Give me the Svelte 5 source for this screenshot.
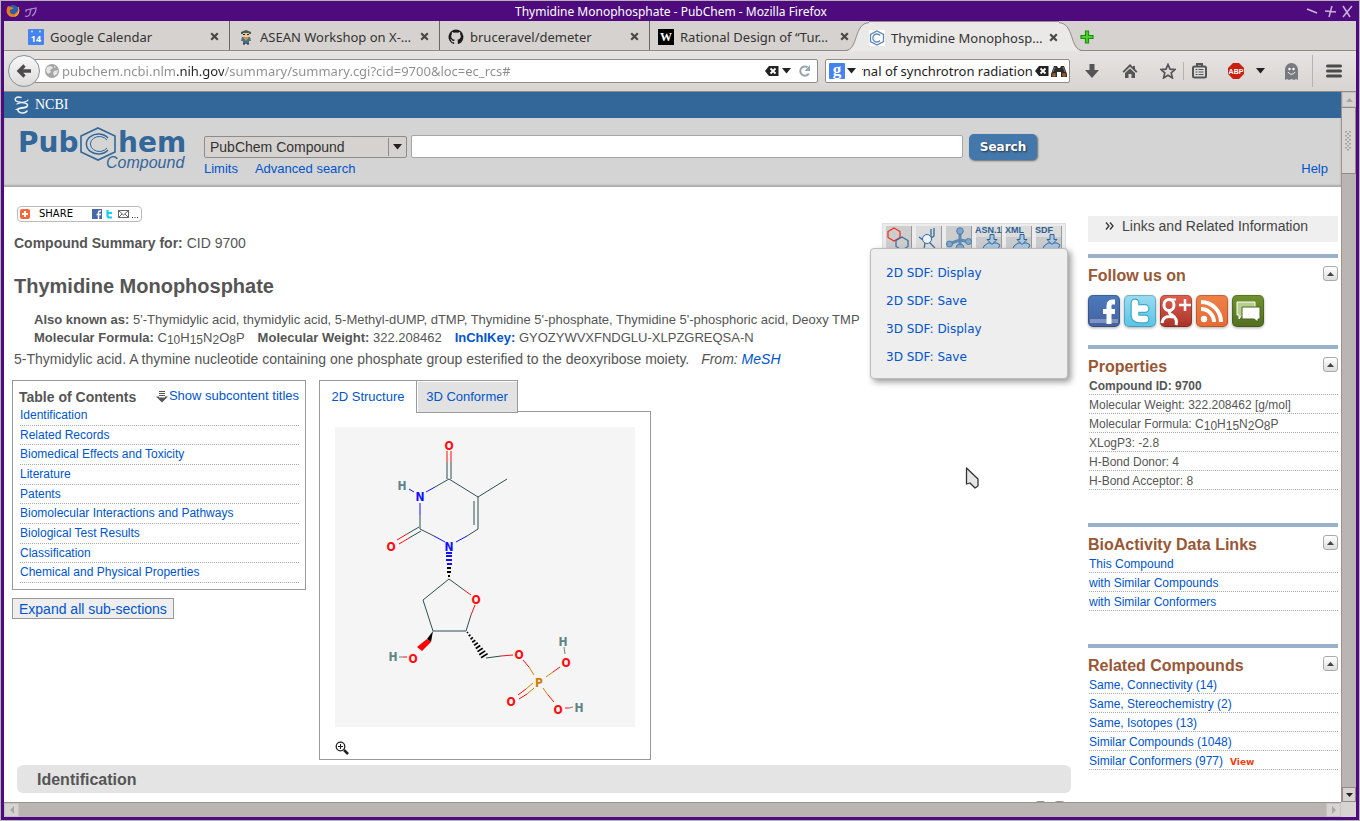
<script>
  import { onMount } from 'svelte';

  let searchField;
  let url = $state('pubchem.ncbi.nlm.nih.gov/summary/summary.cgi?cid=9700&loc=ec_rcs#');
  let webQuery = $state('Journal of synchrotron radiation');
  let query = $state('');

  onMount(() => {
    searchField.scrollLeft = searchField.scrollWidth;
  });

  const tabs = [
    { icon: 'calendar', title: 'Google Calendar' },
    { icon: 'mascot', title: 'ASEAN Workshop on X-…' },
    { icon: 'github', title: 'bruceravel/demeter' },
    { icon: 'w', title: 'Rational Design of “Tur…' }
  ];

  const toc = [
    'Identification',
    'Related Records',
    'Biomedical Effects and Toxicity',
    'Literature',
    'Patents',
    'Biomolecular Interactions and Pathways',
    'Biological Test Results',
    'Classification',
    'Chemical and Physical Properties'
  ];

  const menu = ['2D SDF: Display', '2D SDF: Save', '3D SDF: Display', '3D SDF: Save'];
  const bioLinks = ['This Compound', 'with Similar Compounds', 'with Similar Conformers'];
  const related = [
    'Same, Connectivity (14)',
    'Same, Stereochemistry (2)',
    'Same, Isotopes (13)',
    'Similar Compounds (1048)',
    'Similar Conformers (977)'
  ];

  const C = '#2f4f4f', O = '#ff0d0d', N = '#1010ff', H = '#5f8585', P = '#d08000';
  const atoms = [
    ['O', 114, 18, O], ['H', 67, 58, H], ['N', 85, 69, N], ['N', 114, 119, N], ['O', 56, 119, O],
    ['O', 141, 172, O], ['O', 78, 231, O], ['H', 58, 229, H], ['O', 184, 227, O], ['P', 204, 255, P],
    ['O', 176, 274, O], ['O', 231, 235, O], ['H', 228, 214, H], ['O', 223, 282, O], ['H', 244, 280, H]
  ];
  /* Each bond is split at its midpoint: one stroke per atom colour. */
  const bonds = [
    [112, 24, 112, 35, O], [112, 35, 112, 52, C], [116, 24, 116, 35, O], [116, 35, 116, 52, C],
    [114, 52, 143, 70, C], [143, 70, 172, 52, C], [143, 70, 143, 102, C], [139, 74, 139, 98, C],
    [143, 102, 132, 109, C], [132, 109, 121, 115, N], [110, 115, 99, 109, N], [99, 109, 85, 102, C],
    [85, 102, 85, 88, C], [85, 88, 85, 76, N], [91, 65, 100, 60, N], [100, 60, 114, 52, C],
    [74, 62, 79, 65, N], [84, 100, 72, 107, C], [72, 107, 62, 113, O], [86, 104, 74, 111, C], [74, 111, 64, 117, O],
    [114, 152, 129, 163, C], [129, 163, 136, 168, O], [114, 152, 88, 173, C], [88, 173, 98, 204, C],
    [98, 204, 131, 204, C], [131, 204, 136, 188, C], [136, 188, 140, 178, O],
    [64, 230, 68, 230, H], [68, 230, 72, 230, O], [151, 231, 166, 229, C], [166, 229, 178, 228, O],
    [188, 233, 194, 240, O], [194, 240, 199, 248, P], [211, 250, 218, 245, P], [218, 245, 225, 240, O],
    [230, 227, 229, 220, H], [208, 261, 213, 268, P], [213, 268, 219, 275, O],
    [198, 256, 191, 262, P], [191, 262, 183, 268, O], [199, 261, 192, 267, P], [192, 267, 184, 272, O],
    [230, 281, 234, 281, O], [234, 281, 238, 280, H]
  ];
  const hashes = Array.from({ length: 9 }, (_, i) => i);
</script>

{#snippet clearIcon()}
  <svg width="14" height="12" viewBox="0 0 14 12" aria-hidden="true">
    <path d="M0 6L4 1H13.500V11H4Z" fill="#222" />
    <path d="M5.500 3.500l5 5m0-5l-5 5" stroke="#fff" stroke-width="1.800" />
  </svg>
{/snippet}

{#snippet caret()}
  <svg width="9" height="6" viewBox="0 0 9 6" aria-hidden="true"><path d="M0 0h9L4.500 5.500Z" fill="#222" /></svg>
{/snippet}

{#snippet closeIcon()}
  <svg width="9" height="9" viewBox="0 0 9 9" aria-hidden="true"><path d="M1.200 1.200l6.600 6.600m0-6.600L1.200 7.800" stroke="#4a4845" stroke-width="2.200" /></svg>
{/snippet}

{#snippet blockHead(title)}
  <div class="block-head">
    <h2>{title}</h2>
    <button class="fold" aria-label="Collapse {title}">
      <svg width="7" height="4" viewBox="0 0 7 4"><path d="M0 4L3.500 0 7 4Z" fill="#444" /></svg>
    </button>
  </div>
{/snippet}

{#snippet formula()}C<sub>10</sub>H<sub>15</sub>N<sub>2</sub>O<sub>8</sub>P{/snippet}

<div class="window">
  <div class="titlebar">
    <svg width="32" height="16" viewBox="0 0 32 16" aria-hidden="true">
      <circle cx="8" cy="8" r="6" fill="#275fae" />
      <path d="M3 3C0 8 2 14 8 14c5 0 7-4 6-8-1 3-3 3-4 5-3 1-6-1-5-4 1-1 3-1 4-2-2-1-5-1-6-2Z" fill="#ed7a1c" />
      <path d="M13 4c2 4 0 8-3 9" stroke="#f7c23c" fill="none" />
      <path d="M20 13c2 1 5 0 5-3l1-4-5 1v2M26 6l5-1c0 4-1 6-4 8" stroke="#b48ad0" fill="none" stroke-width="1.200" />
    </svg>
    <span class="window-title">Thymidine Monophosphate - PubChem - Mozilla Firefox</span>
    <svg width="50" height="16" viewBox="0 0 50 16" aria-hidden="true">
      <path d="M2 6l10 4M20 8l11 1M27 3l-3 11M38 3l7 11M47 3l-9 11" stroke="#cbb2dc" fill="none" stroke-width="1.500" />
    </svg>
  </div>

  <div class="tabstrip">
    {#each tabs as tab}
      <div class="tab">
        <svg width="16" height="16" viewBox="0 0 16 16" aria-hidden="true">
          {#if tab.icon === 'calendar'}
            <rect width="16" height="16" rx="1" fill="#4583f0" />
            <circle cx="4" cy="2.500" r="1" fill="#cfe0ff" /><circle cx="12" cy="2.500" r="1" fill="#cfe0ff" />
            <text x="8" y="13" text-anchor="middle" class="cal">14</text>
          {:else if tab.icon === 'mascot'}
            <path d="M3 3l5-2 5 2v2H3Z" fill="#4b5a50" /><rect x="5" y="4" width="6" height="4" fill="#e9c79b" />
            <rect x="5" y="5" width="2" height="1" fill="#222" /><rect x="9" y="5" width="2" height="1" fill="#222" />
            <path d="M4 8h8l1 4h-2v3H5v-3H3Z" fill="#4f6c84" /><path d="M5 8h6l-3 4Z" fill="#c3a13d" /><path d="M5 15h2M9 15h2" stroke="#222" />
          {:else if tab.icon === 'github'}
            <path fill="#1b1b1b" d="M8 .5a7.500 7.500 0 0 0-2.400 14.600c.4.100.5-.2.500-.4v-1.500c-2 .5-2.500-.8-2.700-1.300-.1-.3-.5-.9-.8-1.100-.3-.2-.7-.6 0-.6s1.200.6 1.300.9c.7 1.300 2 .9 2.400.7.100-.5.300-.9.500-1.100C5 10.500 3.200 9.800 3.200 7c0-.8.300-1.500.8-2-.1-.2-.4-1 .1-2 0 0 .6-.2 2 .8a7 7 0 0 1 3.800 0c1.400-1 2-.8 2-.8.500 1 .2 1.800.1 2 .5.500.8 1.200.8 2 0 2.800-1.800 3.500-3.500 3.700.3.200.5.700.5 1.400v2.600c0 .2.100.5.500.4A7.500 7.500 0 0 0 8 .5Z" />
          {:else}
            <rect width="16" height="16" /><text x="8" y="12" text-anchor="middle" class="wiley">W</text>
          {/if}
        </svg>
        <span class="tab-title">{tab.title}</span>
        <button class="plain" aria-label="Close tab">{@render closeIcon()}</button>
      </div>
    {/each}
    <div class="active-wrap">
      <svg class="curve" width="30" height="30" viewBox="0 0 30 30" aria-hidden="true">
        <path d="M0 30C14 30 8 2 25 2H30V30Z" fill="#ebe9e8" /><path d="M0 29.500C14 29.500 8 1.500 25 1.500H30" fill="none" stroke="#8f8b88" />
      </svg>
      <div class="active-tab">
        <svg width="16" height="16" viewBox="0 0 16 16" aria-hidden="true">
          <rect width="16" height="16" fill="#fff" /><path d="M8 1l6.500 3.500v7L8 15l-6.500-3.500v-7Z" fill="none" stroke="#5b87b8" stroke-width="1.300" />
          <path d="M11 5.500a4 4 0 1 0 0 5" fill="none" stroke="#5b87b8" stroke-width="1.300" />
        </svg>
        <span class="tab-title">Thymidine Monophosp…</span>
        <button class="plain" aria-label="Close tab">{@render closeIcon()}</button>
      </div>
      <svg class="curve" width="30" height="30" viewBox="0 0 30 30" aria-hidden="true">
        <path d="M30 30C16 30 22 2 5 2H0V30Z" fill="#ebe9e8" /><path d="M30 29.500C16 29.500 22 1.500 5 1.500H0" fill="none" stroke="#8f8b88" />
      </svg>
    </div>
    <button class="plain new-tab" aria-label="Open a new tab">
      <svg width="14" height="14" viewBox="0 0 14 14"><path d="M5.500 1h3v4.500H13v3H8.500V13h-3V8.500H1v-3h4.500Z" fill="#4fd02c" stroke="#16910d" stroke-width="1.200" /></svg>
    </button>
  </div>

  <div class="navbar">
    <button class="back" aria-label="Back">
      <svg width="16" height="16" viewBox="0 0 16 16"><path d="M8.500 2.500L3 8l5.500 5.500M3.500 8H15" fill="none" stroke="#4b4b4b" stroke-width="3.300" /></svg>
    </button>
    <div class="field urlbar">
      <svg width="14" height="14" viewBox="0 0 14 14" aria-hidden="true">
        <circle cx="7" cy="7" r="7" fill="#a5a5a5" /><path d="M2 3l4-1 2 2-3 2 1 2-3 2-2-3ZM9 7l4-1-1 4-3 2-1-3ZM9 2l2 1-2 1Z" fill="#e6e6e6" />
      </svg>
      <input class="url" aria-label="Address" bind:value={url} />
      <button class="plain" aria-label="Clear address">{@render clearIcon()}</button>
      <button class="plain" aria-label="Show history">{@render caret()}</button>
      <button class="plain" aria-label="Reload">
        <svg width="14" height="14" viewBox="0 0 14 14"><path d="M10.800 9.500A4.600 4.600 0 1 1 9.500 3.300" fill="none" stroke="#98a5ae" stroke-width="2" /><path d="M12 1v6H6.500Z" fill="#98a5ae" /></svg>
      </button>
    </div>
    <div class="field websearch">
      <svg width="16" height="16" viewBox="0 0 16 16" aria-hidden="true"><rect width="16" height="16" rx="1" fill="#4583f0" /><text x="8" y="12" text-anchor="middle" class="google">g</text></svg>
      <button class="plain" aria-label="Choose search engine">{@render caret()}</button>
      <input aria-label="Web search" bind:this={searchField} bind:value={webQuery} />
      <button class="plain" aria-label="Clear search">{@render clearIcon()}</button>
      <button class="plain" aria-label="Find">
        <svg width="16" height="13" viewBox="0 0 16 13"><path d="M3 1h3l1 2h2l1-2h3l3 8v3h-6V7H6v5H0V9Z" fill="#302c29" /><circle cx="3" cy="10" r="2" fill="#9b5b2b" /><circle cx="13" cy="10" r="2" fill="#9b5b2b" /><path d="M4 2L2 7M12 2l2 5" stroke="#777" /></svg>
      </button>
    </div>
    <div class="tools">
      <button class="plain tool" aria-label="Downloads"><svg width="16" height="16" viewBox="0 0 16 16"><path d="M5.500 1h5v6H15l-7 8-7-8h4.500Z" fill="#555" /></svg></button>
      <button class="plain tool" aria-label="Home"><svg width="16" height="16" viewBox="0 0 16 16"><path d="M8 1L.5 8.500l1.300 1.200L8 3.700l6.200 6 1.300-1.200L13 6V3h-2v1Z" fill="#555" /><path d="M8 5.500l5 4.500v5H9.500v-4h-3v4H3v-5Z" fill="#555" /></svg></button>
      <button class="plain tool star" aria-label="Bookmark this page"><svg width="16" height="16" viewBox="0 0 16 16"><path d="M8 1.500l2 4.600 5 .5-3.800 3.300 1.200 5L8 12.200l-4.400 2.700 1.200-5L1 6.600l5-.5Z" fill="none" stroke="#555" stroke-width="1.700" /></svg></button>
      <span class="rule"></span>
      <button class="plain tool narrow" aria-label="Bookmarks"><svg width="15" height="16" viewBox="0 0 15 16"><path d="M5 3V1h5v2" fill="none" stroke="#555" stroke-width="2" /><rect x="1" y="3.500" width="13" height="11" rx="1.500" fill="none" stroke="#555" stroke-width="2" /><path d="M3.500 6.500h2m1 0h5m-8 2.500h2m1 0h5m-8 2.500h2m1 0h5" stroke="#555" stroke-width="1.200" /></svg></button>
      <button class="plain tool" aria-label="Adblock Plus"><svg width="16" height="16" viewBox="0 0 16 16"><path d="M5 0h6l5 5v6l-5 5H5l-5-5V5Z" fill="#c9200f" /><text x="8" y="11" text-anchor="middle" class="abp">ABP</text></svg></button>
      <button class="plain" aria-label="Adblock options">{@render caret()}</button>
      <button class="plain tool ghost" aria-label="Ghostery"><svg width="15" height="17" viewBox="0 0 15 17"><path d="M1 17V7c0-4 3-7 6.500-7S14 3 14 7v10l-2-1-2 1-2.500-1-2.500 1-2-1Z" fill="#777a80" /><circle cx="5.500" cy="6" r="1.200" fill="#fff" /><circle cx="9.500" cy="6" r="1.200" fill="#fff" /><path d="M4 9c2 3 5 3 7 0" fill="none" stroke="#fff" /></svg></button>
      <span class="rule tall"></span>
      <button class="plain tool" aria-label="Open menu"><svg width="16" height="14" viewBox="0 0 16 14"><path d="M1.500 2h13M1.500 7h13M1.500 12h13" stroke="#4b4b4b" stroke-width="3" stroke-linecap="round" /></svg></button>
    </div>
  </div>

  <div class="viewport">
    <div class="page">
      <div class="ncbi">
        <svg width="15" height="18" viewBox="0 0 15 18" aria-hidden="true">
          <g fill="none" stroke="#eef4f9" stroke-linecap="round">
            <path d="M7 1.500C2 0 0 3 2 5c3 2 9 1 11 3 2 3-3 3.500-6 3.800C3 12.500 3 15 6 16.500c3 1 6 0 7-1.500" stroke-width="1.500" />
            <path d="M14 4c-2 3-8 2-11 4M13 11c-3 2-7 1-11 2.500" stroke-width="1.200" />
          </g>
        </svg>
        <span>NCBI</span>
      </div>

      <header class="masthead">
        <svg class="logo" width="170" height="48" viewBox="0 0 170 48" role="img" aria-label="PubChem Compound">
          <g fill="#336699">
            <text x="-1" y="27" class="logo-big">Pub</text>
            <text x="99" y="27" class="logo-big">hem</text>
            <text x="87" y="43" class="logo-small">Compound</text>
          </g>
          <path d="M79 3l17 8v16l-17 8-17-8V11Z" fill="none" stroke="#336699" stroke-width="1.600" />
          <path d="M89 13a12 10 0 1 0 0 12" fill="none" stroke="#336699" stroke-width="1.500" />
          <path d="M88 15a9 7.500 0 1 0 0 8" fill="none" stroke="#336699" />
        </svg>
        <form class="search" onsubmit={(e) => e.preventDefault()}>
          <div class="search-row">
            <div class="pick">
              <select aria-label="Database"><option>PubChem Compound</option></select>
              <span class="pick-arrow">{@render caret()}</span>
            </div>
            <input class="query" aria-label="Search term" bind:value={query} />
            <button class="go">Search</button>
          </div>
          <div class="search-links"><a href="#limits">Limits</a><a href="#advanced">Advanced search</a></div>
        </form>
        <a class="help" href="#help">Help</a>
      </header>

      <div class="columns">
        <main>
          <div class="intro">
            <div>
              <button class="share">
                <svg width="10" height="10" viewBox="0 0 10 10" aria-hidden="true"><rect width="10" height="10" rx="2" fill="#f8673a" /><path d="M5 2v6M2 5h6" stroke="#fff" stroke-width="2" /></svg>
                <span class="share-word">SHARE</span>
                <svg width="48" height="10" viewBox="0 0 48 10" aria-hidden="true">
                  <rect x="2" width="10" height="10" fill="#4967a8" /><path d="M11 2h-1Q8.500 2 8.500 4v6M6.500 5.500H11" stroke="#fff" stroke-width="1.500" fill="none" />
                  <path d="M17.500 1v5.500q0 2 2 2H22M17.500 4H22" stroke="#0fd0ee" stroke-width="2.200" fill="none" />
                  <rect x="28.500" y="1.500" width="10" height="7" fill="#fff" stroke="#666" /><path d="M29 2l4.500 4L38 2M29 8l3-3M38 8l-3-3" stroke="#666" fill="none" />
                  <path d="M42 8.500h1m1.500 0h1m1.500 0h1" stroke="#333" />
                </svg>
              </button>
              <p class="summary"><b>Compound Summary for:</b> CID 9700</p>
            </div>

            <div class="formats">
              <button aria-label="2D structure"><svg width="26" height="26" viewBox="0 0 26 26"><path d="M8 2l6 3.500v6L8 15l-6-3.500v-6Z" fill="none" stroke="#f22b1b" stroke-width="1.200" /><path d="M16 11l6 3.500v6L16 24l-6-3.500v-6Z" fill="none" stroke="#35689b" stroke-width="1.200" /></svg></button>
              <button aria-label="Search structure"><svg width="26" height="26" viewBox="0 0 26 26"><path d="M15 3v8M18 2v8l-4 3M7 14l-4-3M9 17l-1 6M13 16l6 6" stroke="#35689b" stroke-width="1.300" fill="none" /><circle cx="11" cy="13" r="4.500" fill="#eef4fa" stroke="#35689b" /></svg></button>
              <button aria-label="3D structure"><svg width="26" height="26" viewBox="0 0 26 26"><path d="M14 5v9L3 18m11-4l11 2m-11-2v8" stroke="#5b8ab5" stroke-width="3" fill="none" /><g fill="#7fa8cc" stroke="#4a7cac"><circle cx="14" cy="5" r="3.300" /><circle cx="3.500" cy="18" r="3" /><circle cx="22.500" cy="15.500" r="3" /><circle cx="14" cy="22" r="4" /></g></svg></button>
              {#each ['ASN.1', 'XML', 'SDF'] as kind}
                <button aria-label="Save as {kind}"><svg width="26" height="26" viewBox="0 0 26 26"><rect x="0" y="11" width="25" height="15" fill="#c9cacb" /><path d="M8 20l4-3h9l3 2-3 6H6Z" fill="#a9c5df" stroke="#35689b" /><path d="M14 8.500h4v5h3l-5 5-5-5h3Z" fill="#a9c9e6" stroke="#2d6194" /><text x="-1" y="7" class="kind">{kind}</text></svg></button>
              {/each}
              <div class="popup">
                {#each menu as item}<a href="#sdf">{item}</a>{/each}
              </div>
            </div>
          </div>

          <h1>Thymidine Monophosphate</h1>
          <p class="facts"><b>Also known as:</b> 5'-Thymidylic acid, thymidylic acid, 5-Methyl-dUMP, dTMP, Thymidine 5'-phosphate, Thymidine 5'-phosphoric acid, Deoxy TMP</p>
          <p class="facts row">
            <span><b>Molecular Formula:</b> {@render formula()}</span>
            <span><b>Molecular Weight:</b> 322.208462</span>
            <span><a href="#inchi"><b>InChIKey:</b></a> GYOZYWVXFNDGLU-XLPZGREQSA-N</span>
          </p>
          <p class="blurb">5-Thymidylic acid. A thymine nucleotide containing one phosphate group esterified to the deoxyribose moiety. <i>From: <a href="#mesh">MeSH</a></i></p>

          <div class="body-row">
            <div class="left">
              <nav class="toc">
                <div class="toc-head">
                  <h2>Table of Contents</h2>
                  <a href="#subcontent">
                    <svg width="12" height="13" viewBox="0 0 12 13" aria-hidden="true"><path d="M3 1.500h6M3 3.500h6M3 5.500h6" stroke="#555" /><path d="M0 6.500h3V7.500h6v-1h3L6 12.500Z" fill="#555" /></svg>Show subcontent titles</a>
                </div>
                <ul>{#each toc as item}<li><a href="#section">{item}</a></li>{/each}</ul>
              </nav>
              <button class="expand">Expand all sub-sections</button>
            </div>

            <div class="structure">
              <div class="views">
                <button class="view on">2D Structure</button>
                <button class="view">3D Conformer</button>
              </div>
              <div class="panel">
                <svg class="molecule" viewBox="0 0 300 300" role="img" aria-label="2D structure of Thymidine Monophosphate">
                  <rect width="300" height="300" fill="#f5f5f5" />
                  {#each bonds as [x1, y1, x2, y2, color]}<line {x1} {y1} {x2} {y2} stroke={color} />{/each}
                  <path d="M111 126h6m-6 3h6m-6 4h6m-5 4h5" stroke={N} stroke-width="2" />
                  <path d="M112 141h4m-4 4h4m-3 4h2" stroke="#000" stroke-width="2" />
                  <path d="M98 204l-6 8 4 3Z" fill="#000" />
                  <path d="M92 212l4 3-9 9-5-4Z" fill="#ff0000" />
                  {#each hashes as i}
                    <line x1={132 + i * 2 - i / 4} y1={206 + i * 2.9 + i / 5} x2={133 + i * 2.200 + i / 4} y2={205 + i * 2.9 - i / 5} stroke="#000" stroke-width="1.700" />
                  {/each}
                  {#each atoms as [label, x, y, color]}<text {x} y={y + 5} fill={color} text-anchor="middle" class="atom">{label}</text>{/each}
                </svg>
                <button class="plain zoom" aria-label="Enlarge structure">
                  <svg width="14" height="14" viewBox="0 0 14 14"><circle cx="5.500" cy="5.500" r="4.300" fill="#fff" stroke="#222" stroke-width="1.300" /><path d="M5.500 3v5M3 5.500h5" stroke="#222" /><path d="M9 9l4 4" stroke="#222" stroke-width="2.500" /></svg>
                </button>
              </div>
            </div>
          </div>

          <h2 class="section">Identification</h2>
          <div class="stubs"><span></span><span></span></div>
        </main>

        <aside>
          <a class="jump" href="#links">
            <svg width="9" height="8" viewBox="0 0 9 8" aria-hidden="true"><path d="M1 .5L4 4 1 7.500M5 .5L8 4 5 7.500" fill="none" stroke="#333" stroke-width="1.300" /></svg>
            Links and Related Information</a>

          <section class="block">
            {@render blockHead('Follow us on')}
            <div class="social">
              <a class="fb" href="#facebook" aria-label="Facebook"><svg viewBox="0 0 32 32"><path d="M2 26h28" stroke="#8094c4" stroke-width="4" /><path d="M27 7h-3q-3 0-3 4v18M15 16.500h12" fill="none" stroke="#fff" stroke-width="5" /></svg></a>
              <a class="tw" href="#twitter" aria-label="Twitter"><svg viewBox="0 0 32 32"><path d="M11 8v12q0 4 5 4h5M11 13.500h10" fill="none" stroke="#3daacc" stroke-width="9" stroke-linecap="round" /><path d="M11 8v12q0 4 5 4h5M11 13.500h10" fill="none" stroke="#fff" stroke-width="6.500" stroke-linecap="round" /></svg></a>
              <a class="gp" href="#google" aria-label="Google Plus"><svg viewBox="0 0 32 32"><g fill="none" stroke="#fff"><ellipse cx="9" cy="10" rx="5" ry="5.500" stroke-width="3" /><path d="M8 4.500h8" stroke-width="2" /><path d="M11 15q-4 3 1 5 6 4 4 10M13 22Q3 20 2 28" stroke-width="3" /><path d="M25 4v12M19 10h12" stroke-width="2.500" /></g></svg></a>
              <a class="rss" href="#rss" aria-label="RSS"><svg viewBox="0 0 32 32"><circle cx="8" cy="24" r="3.200" fill="#fff" /><path d="M5 14a13 13 0 0 1 13 13M5 7a20 20 0 0 1 20 20" fill="none" stroke="#fff" stroke-width="4" /></svg></a>
              <a class="chat" href="#blog" aria-label="Blog"><svg viewBox="0 0 32 32"><path d="M6 7h17v13H10l-3 4v-4H5V7Z" fill="#b7cf8d" stroke="#fff" /><path d="M10 12h18v12h-2v3l-4-3H10Z" fill="#fff" stroke="#47661b" /></svg></a>
            </div>
          </section>

          <section class="block">
            {@render blockHead('Properties')}
            <ul>
              <li><b>Compound ID: 9700</b></li>
              <li>Molecular Weight: 322.208462 [g/mol]</li>
              <li>Molecular Formula: {@render formula()}</li>
              <li>XLogP3: -2.8</li>
              <li>H-Bond Donor: 4</li>
              <li>H-Bond Acceptor: 8</li>
            </ul>
          </section>

          <section class="block">
            {@render blockHead('BioActivity Data Links')}
            <ul>{#each bioLinks as item}<li><a href="#bio">{item}</a></li>{/each}</ul>
          </section>

          <section class="block">
            {@render blockHead('Related Compounds')}
            <ul>
              {#each related as item, i}
                <li><a href="#related">{item}</a>{#if i === 4}<a class="view-tag" href="#view">View</a>{/if}</li>
              {/each}
            </ul>
          </section>
        </aside>
      </div>
    </div>

    <div class="vbar">
      <span class="cap dim"><svg width="7" height="4" viewBox="0 0 7 4"><path d="M0 4L3.500 0 7 4Z" fill="#aaa6a2" /></svg></span>
      <span class="thumb">
        <svg width="7" height="20" viewBox="0 0 7 20"><path d="M1 0v20M5 0v20M3 2v18" stroke="#8f8a86" stroke-width="1.400" stroke-dasharray="1.500 2.500" /></svg>
      </span>
      <span class="cap end"><svg width="7" height="4" viewBox="0 0 7 4"><path d="M0 0h7L3.500 4Z" fill="#222" /></svg></span>
    </div>
    <div class="hbar">
      <span class="cap dim"><svg width="4" height="8" viewBox="0 0 4 8"><path d="M4 0v8L0 4Z" fill="#aaa6a2" /></svg></span>
      <span class="cap dim"><svg width="4" height="8" viewBox="0 0 4 8"><path d="M0 0v8L4 4Z" fill="#aaa6a2" /></svg></span>
    </div>
    <div class="corner"></div>
  </div>

  <svg class="pointer" width="15" height="22" viewBox="0 0 15 22" aria-hidden="true">
    <path d="M1.500 1v16l3.500-1 5 5 3-2V12Z" fill="#e6e6e6" stroke="#333" stroke-width="1.300" stroke-linejoin="round" />
  </svg>
</div>

<style>
  :global(body) { margin: 0; }
  * { box-sizing: border-box; }
  h1, h2, p, ul { margin: 0; padding: 0; }
  ul { list-style: none; }
  button, input, select { font: inherit; color: inherit; margin: 0; }
  svg { display: block; flex: none; }
  .plain { border: 0; padding: 0; background: none; display: flex; align-items: center; justify-content: center; }

  .window {
    position: relative;
    display: flex;
    flex-direction: column;
    height: 100vh;
    border: 1px solid #b7b3b8;
    padding: 0 3px 3px;
    background: #4e0b7d;
    font-family: "Noto Sans", sans-serif;
    color: #333;
    overflow: hidden;
  }
  .titlebar { display: flex; align-items: center; justify-content: space-between; height: 20px; color: #fff; font-size: 12px; padding: 0 1px; }

  .tabstrip { display: flex; height: 30px; padding-left: 16px; background: #d6d2cf; box-shadow: inset 0 -1px #8f8b88; font-size: 13px; }
  .tab { display: flex; align-items: center; gap: 6px; width: 210px; height: 29px; padding: 2px 10px 0 8px; border-right: 1px solid #6a6662; }
  .tab:nth-child(4) { border-right: 0; width: 199px; padding-right: 0; }
  .tab-title { flex: 1; white-space: nowrap; overflow: hidden; }
  .active-wrap { display: flex; height: 30px; margin-left: -4px; }
  .active-tab { display: flex; align-items: center; gap: 6px; width: 190px; margin: 0 -6px; padding: 2px 1px 0 0; border-top: 1px solid #8f8b88; background: #ebe9e8; z-index: 1; }
  .active-tab .tab-title { margin-right: -6px; }
  .active-tab .plain { margin-left: 6px; }
  .active-tab .tab-title { overflow: visible; min-width: 0; }
  .new-tab { padding-top: 2px; margin-left: -3px; }
  .cal { font: bold 9px "Noto Sans", sans-serif; fill: #fff; }
  .wiley { font: bold 12px "Liberation Serif", serif; fill: #fff; }
  .google { font: bold 17px "Liberation Serif", serif; fill: #fff; }
  .abp { font: bold 7px "Liberation Sans", sans-serif; fill: #fff; }

  .navbar { display: flex; align-items: center; height: 41px; border-bottom: 1px solid #8f8b88; background: linear-gradient(#e6e3e2, #d7d4d1); font-size: 13px; color: #222; }
  .back { display: grid; place-items: center; width: 32px; height: 32px; margin-left: 4px; padding: 0; border: 1px solid #84909f; border-radius: 50%; background: linear-gradient(#f8f7f7, #dedcdb); z-index: 1; }
  .field { display: flex; align-items: center; height: 24px; border: 1px solid #908c89; border-radius: 2px; background: #fff; }
  .field input { flex: 1; min-width: 0; border: 0; outline: 0; padding: 0; background-color: transparent; }
  .urlbar { flex: 1; margin-left: -8px; padding: 0 5px 0 12px; gap: 3px; }
  .urlbar .plain:last-child { margin-left: 4px; }
  .field .url { color: transparent; background: linear-gradient(90deg, #8d8d8d 114px, #222 114px, #222 162px, #8d8d8d 162px); background-clip: text; -webkit-background-clip: text; }
  .websearch { width: 245px; margin-left: 7px; padding: 0 2px 0 3px; gap: 2px; }
  .websearch input { margin-left: 4px; }
  .tools { display: flex; align-items: center; width: 286px; padding-left: 3px; }
  .tool { width: 38px; height: 32px; }
  .star { width: 34px; padding-left: 4px; }
  .narrow { width: 31px; }
  .narrow + .tool { width: 41px; }
  .ghost { margin-left: 7px; margin-right: 2px; }
  .rule { width: 1px; height: 18px; background: #b6b2af; }
  .rule.tall { height: 32px; }
  .tall + .tool { width: 42px; }

  .viewport { flex: 1; min-height: 0; display: grid; grid-template: minmax(0, 1fr) 15px / minmax(0, 1fr) 15px; background: #d6d3d0; }
  .page { overflow: hidden; background: #fff; color: #555; font-family: "Liberation Sans", Arial, sans-serif; font-size: 12px; }
  .page a { color: #0055cc; text-decoration: none; }
  .ncbi { display: flex; align-items: center; gap: 6px; height: 26px; padding-left: 10px; background: #336699; color: #fff; font: 14px "Liberation Serif", serif; }

  .masthead { display: flex; align-items: flex-start; height: 69px; padding: 7px 13px 0 15px; background: #d4d4d4; box-shadow: inset 0 -2px 2px #aaa; }
  .logo { overflow: visible; }
  .logo-big { font: bold 28px "DejaVu Sans", Verdana, sans-serif; }
  .logo-small { font: italic 16px "Liberation Sans", Arial, sans-serif; }
  .search { flex: 1; max-width: 833px; margin-left: 15px; padding-top: 9px; }
  .search-row { display: flex; align-items: center; height: 26px; }
  .pick { position: relative; width: 203px; height: 22px; margin-right: 4px; }
  .pick select { appearance: none; width: 100%; height: 22px; padding: 0 5px; border: 1px solid #8f8b88; border-radius: 2px; background: #d6d2cf; font-size: 14px; color: #333; }
  .pick-arrow { position: absolute; right: 1px; top: 2px; display: grid; place-items: center; width: 18px; height: 18px; border-left: 1px solid #8f8b88; pointer-events: none; }
  .query { flex: 1; min-width: 0; height: 23px; margin-bottom: 2px; border: 1px solid #a5a5a5; border-radius: 2px; background: #fff; }
  .go { width: 68px; height: 26px; margin-left: 6px; padding: 0; border: 0; border-radius: 5px; background: #4477aa; color: #fff; font: bold 12px "DejaVu Sans", sans-serif; text-shadow: 1px 1px 2px #234; box-shadow: 1px 1px 2px #666; }
  .search-links { display: flex; gap: 17px; padding-top: 1px; font-size: 13px; line-height: 16px; }
  .help { margin-left: auto; padding-top: 36px; font-size: 13px; line-height: 16px; }

  .columns { display: flex; gap: 17px; padding: 19px 3px 0 8px; }
  main { flex: 1; min-width: 0; }
  .intro { display: flex; justify-content: space-between; align-items: flex-start; }
  .share { display: flex; align-items: center; width: 125px; height: 16px; margin: 0 0 11px 5px; padding: 0 3px 0 2px; border: 1px solid #bbb; border-radius: 4px; background: #fff; color: #000; }
  .share-word { flex: 1; padding-left: 9px; text-align: left; font: 10px/14px "DejaVu Sans", sans-serif; }
  .summary { padding-left: 2px; font-size: 14px; line-height: 20px; }
  .formats { position: relative; display: flex; gap: 4px; height: 30px; margin: 17px 5px 0 0; padding: 3px 4px 0 4px; background: #ececec; box-shadow: inset 0 0 0 1px #ddd; }
  .formats button { width: 26px; height: 26px; padding: 0; border: 0; border-right: 1px solid #999; background: #dcdcdc; }
  .formats button:nth-child(1), .formats button:nth-child(3) { background: #cdcdcd; }
  .kind { font: bold 9px "Liberation Sans", Arial, sans-serif; fill: #2d6194; }
  .formats svg { overflow: visible; }
  .popup { position: absolute; top: 25px; right: -2px; display: flex; flex-direction: column; gap: 8px; width: 198px; padding: 14px 15px 11px; border: 1px solid #bcbcbc; border-radius: 4px; background: #eee; box-shadow: 3px 3px 6px #999; font: 12px/20px "DejaVu Sans", Verdana, sans-serif; }

  h1 { margin-top: 21px; padding-left: 2px; font-size: 20px; line-height: 24px; }
  .facts { padding-left: 22px; font-size: 13px; line-height: 18px; white-space: nowrap; }
  h1 + .facts { margin-top: 13px; }
  .row { display: flex; gap: 13px; }
  sub { font-size: 12px; line-height: 0; vertical-align: -2px; }
  .blurb { margin: 2px 0 11px; padding-left: 2px; font-size: 14px; line-height: 20px; white-space: nowrap; }
  .blurb i { margin-left: 8px; }

  .body-row { display: flex; gap: 13px; align-items: flex-start; }
  .left { width: 294px; }
  .toc { border: 1px solid #999; padding: 6px 6px 6px 7px; }
  .toc-head { display: flex; justify-content: space-between; height: 19px; margin-left: -1px; }
  .toc-head h2 { font-size: 14px; line-height: 20px; }
  .toc-head a { display: flex; align-items: center; gap: 1px; font-size: 13px; line-height: 18px; height: 18px; }
  .toc ul { display: grid; grid-auto-rows: 1fr; height: 177px; }
  .toc li, .block li { border-bottom: 1px dotted #aaa; }
  .toc li { line-height: 18px; font-size: 12px; }
  .expand { display: block; height: 21px; margin-top: 8px; padding: 0 6px; border: 1px solid #999; background: #eee; color: #0055cc; font-size: 14px; line-height: 18px; }
  .structure { width: 332px; }
  .views { display: flex; }
  .view { width: 97px; height: 32px; margin-bottom: -1px; padding: 0; border: 1px solid #999; border-bottom: 0; border-right: 0; background: #fff; color: #0055cc; font-size: 13px; z-index: 1; }
  .view:not(.on) { width: 102px; height: 33px; border: 1px solid #999; background: #e2e2e2; box-shadow: inset 1px 1px #fff; }
  .panel { margin-top: -1px; border: 1px solid #999; padding: 15px 15px 4px; }
  .molecule { width: 100%; height: auto; }
  .atom { font: bold 12px "DejaVu Sans Condensed", "DejaVu Sans", sans-serif; }
  .zoom { margin-top: 14px; height: 14px; }
  .section { height: 28px; margin: 5px 0 0 5px; padding-left: 20px; border-radius: 6px; background: #e4e4e4; font-size: 16px; line-height: 29px; }
  .stubs { display: flex; justify-content: flex-end; gap: 8px; padding: 8px 6px 0 0; }
  .stubs span { width: 11px; height: 11px; border: 1px solid #999; border-radius: 3px; }

  aside { width: 250px; flex: none; padding-top: 10px; }
  .jump { display: flex; align-items: center; gap: 8px; height: 26px; margin-bottom: 12px; padding: 0 0 6px 17px; background: #efefef; font-size: 14px; }
  .page .jump { color: #444; }
  .block { border-top: 4px solid #99b0ca; padding-bottom: 33px; }
  .block-head { display: flex; justify-content: space-between; height: 27px; padding-top: 8px; }
  .block-head h2 { font-size: 16px; line-height: 20px; color: #985735; }
  .fold { display: grid; place-items: center; width: 15px; height: 15px; padding: 0; border: 1px solid #aaa; border-radius: 3px; background: linear-gradient(#fff, #ddd); }
  .block ul { padding-left: 1px; }
  .block li { height: 19px; line-height: 20px; }
  .social { display: flex; gap: 4px; height: 27px; padding-top: 10px; }
  .social a { width: 32px; height: 32px; border-radius: 5px; box-shadow: 0 1px 3px #aaa, inset 0 0 0 1px #0003; }
  .fb { background: linear-gradient(#4b7abc, #45619f); }
  .tw { background: linear-gradient(#9bdcf0, #58c4e8); }
  .gp { background: linear-gradient(#e0604f, #a83229); }
  .rss { background: linear-gradient(#ee8147, #e66a35); }
  .chat { background: linear-gradient(#71922e, #516f20); }
  .page .view-tag { margin-left: 7px; color: #f04010; font: bold 9px "DejaVu Sans", sans-serif; }

  .vbar { display: flex; flex-direction: column; background: #bab5b3; border-left: 1px solid #99948f; }
  .cap { display: grid; place-items: center; width: 15px; height: 15px; border: 1px solid #8f8b88; background: #d6d3d0; }
  .vbar .cap { width: 14px; }
  .cap.dim { border-color: #c6c2bf; }
  .end { margin-top: auto; }
  .thumb { display: grid; place-items: center; height: 67px; border: 1px solid #8f8b88; border-left: 0; background: #d8d5d2; }
  .hbar { display: flex; justify-content: space-between; border-top: 1px solid #99948f; background: #bab5b3; }
  .hbar .cap { height: 14px; }
  .pointer { position: absolute; left: 964px; top: 466px; }
</style>
